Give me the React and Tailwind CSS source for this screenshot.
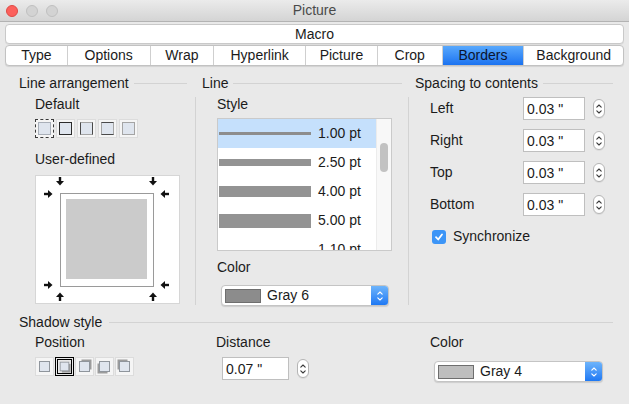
import React from 'react'

const tabs = [
  ['Type', 61],
  ['Options', 83],
  ['Wrap', 64],
  ['Hyperlink', 92],
  ['Picture', 72],
  ['Crop', 65],
  ['Borders', 82],
  ['Background', 100],
]

const lineRows = [
  ['1.00 pt', 'h-[3px] bg-[#8d8d8d]', true],
  ['2.50 pt', 'h-[7px] bg-[#939393]', false],
  ['4.00 pt', 'h-[11px] bg-[#939393]', false],
  ['5.00 pt', 'h-[14px] bg-[#939393]', false],
  ['1.10 pt', 'h-[5px]', false],
]

function Chevrons({ color = '#3a3a3a' }) {
  return (
    <svg width="8" height="14" viewBox="0 0 8 14" fill="none" stroke={color} strokeWidth="1.1" strokeLinecap="round" strokeLinejoin="round">
      <path d="M1.8 5.2 L4 3 L6.2 5.2" />
      <path d="M1.8 8.8 L4 11 L6.2 8.8" />
    </svg>
  )
}

function Stepper() {
  return (
    <div className="w-[12px] h-[19px] rounded-[6px] border border-[#b4b4b4] bg-white flex items-center justify-center shadow-[0_1px_0_rgba(0,0,0,0.06)]">
      <Chevrons />
    </div>
  )
}

function Field({ value, width = 'w-[62px]' }) {
  return (
    <div className={`${width} h-[23px] border border-[#bfbfbf] bg-white pl-[3px] flex items-center leading-none`}>
      {value}
    </div>
  )
}

function ColorSelect({ swatch, label, width }) {
  return (
    <div className={`${width} h-[21px] flex rounded-[4px] border border-[#c4c4c4] bg-white shadow-[0_1px_1px_rgba(0,0,0,0.12)] overflow-hidden`}>
      <div className="flex-1 flex items-center pl-[3px]">
        <div className={`w-[36px] h-[14px] border border-[#6e6e6e] ${swatch}`} />
        <span className="ml-[6px]">{label}</span>
      </div>
      <div className="w-[17px] bg-gradient-to-b from-[#6db4fb] to-[#1d78f3] flex items-center justify-center">
        <Chevrons color="#ffffff" />
      </div>
    </div>
  )
}

function Header({ title, lineClass }) {
  return (
    <div className="flex items-center h-[16px] leading-[16px]">
      <span className="whitespace-nowrap">{title}</span>
      <div className={`flex-1 h-px bg-[#d3d3d3] ml-[5px] ${lineClass}`} />
    </div>
  )
}

// Default line arrangement presets
function ArrIcon({ variant }) {
  const inner = [
    'border-[#a9afb8]',
    'border-[#2b2b2b]',
    'border-x-[#4a4a4a] border-y-[#a4a4a4]',
    'border-y-[#4a4a4a] border-x-[#a4a4a4]',
    'border-[#a4a4a4]',
  ][variant]
  const outer = variant === 0 ? 'border-dashed border-[#3a3a3a]' : 'border-[#dcdcdc]'
  return (
    <div className={`w-[19px] h-[19px] border bg-[#f5f5f5] flex items-center justify-center ${outer}`}>
      <div className={`w-[13px] h-[13px] bg-[#dfe5ee] border ${inner}`} />
    </div>
  )
}

// Shadow position presets
function ShadowIcon({ variant }) {
  const off = [null, [2, 2], [2, -2], [-2, 2], [-2, -2]][variant]
  return (
    <div className={`w-[19px] h-[19px] flex items-center justify-center ${variant === 1 ? 'border-[3px] border-double border-black' : 'border border-[#dcdcdc] bg-[#f5f5f5]'}`}>
      <svg width="15" height="15" viewBox="0 0 15 15">
        {off && <rect x={2.5 + off[0]} y={2.5 + off[1]} width="10" height="10" fill="#9c9c9c" />}
        <rect x="2.5" y="2.5" width="10" height="10" fill="#dfe5ee" stroke="#8f959c" />
      </svg>
    </div>
  )
}

function Arrow({ x, y, rot }) {
  return (
    <g transform={`translate(${x} ${y}) rotate(${rot})`} fill="#111">
      <rect x="-1.2" y="-5" width="2.4" height="4.5" />
      <polygon points="-4,-1 4,-1 0,3.5" />
    </g>
  )
}

export default function App() {
  return (
    <div className="w-[629px] h-[404px] overflow-hidden bg-[#e9e9e9] font-['Liberation_Sans',Arial,sans-serif] text-[14px] text-[#1b1b1b]">
      {/* Title bar */}
      <div className="h-[22px] grid grid-cols-[1fr_auto_1fr] items-center bg-gradient-to-b from-[#ebebeb] to-[#d4d4d4] border-b border-[#b3b3b3]">
        <div className="flex items-center gap-[8px] pl-[6px]">
          <div className="w-[12px] h-[12px] rounded-full bg-[#fc605c] border border-[#de4a45]" />
          <div className="w-[12px] h-[12px] rounded-full bg-[#d3d3d3] border border-[#c0c0c0]" />
          <div className="w-[12px] h-[12px] rounded-full bg-[#d3d3d3] border border-[#c0c0c0]" />
        </div>
        <div className="text-[#4a4a4a]">Picture</div>
        <div />
      </div>

      {/* Macro + tabs */}
      <div className="mx-[5px] mt-[2px] h-[20px] rounded-[4px] border border-[#c9c9c9] bg-white flex items-center justify-center shadow-[0_1px_0_rgba(0,0,0,0.05)]">
        Macro
      </div>
      <div className="mx-[5px] mt-[1px] h-[21px] flex rounded-[4px] border border-[#c2c2c2] bg-white overflow-hidden shadow-[0_1px_1px_rgba(0,0,0,0.1)]">
        {tabs.map(([t, w], i) => (
          <div
            key={t}
            style={{ width: w }}
            className={`flex items-center justify-center ${i > 0 ? 'border-l border-[#cfcfcf]' : ''} ${t === 'Borders' ? 'bg-gradient-to-b from-[#58a8fc] to-[#1a72f0] text-[#0b1530]' : ''}`}
          >
            {t}
          </div>
        ))}
      </div>

      {/* Upper columns */}
      <div className="flex pl-[19px] mt-[9px]">
        {/* Line arrangement */}
        <div className="w-[177px]">
          <Header title="Line arrangement" lineClass="mr-[9px]" />
          <div className="mt-[6px] h-[208px] border-r border-[#d3d3d3] pl-[16px]">
            <div className="leading-[15px]">Default</div>
            <div className="mt-[7px] flex gap-[2px]">
              {[0, 1, 2, 3, 4].map(v => (
                <ArrIcon key={v} variant={v} />
              ))}
            </div>
            <div className="mt-[13px] leading-[16px]">User-defined</div>
            <div className="mt-[8px] w-[145px] h-[129px] border border-[#d6d6d6] bg-white">
              <svg width="143" height="127" viewBox="0 0 143 127">
                <rect x="24.5" y="17.5" width="93" height="93" fill="none" stroke="#9a9a9a" />
                <rect x="30" y="23" width="81" height="80" fill="#cbcbcb" />
                <Arrow x={24} y={6} rot={0} />
                <Arrow x={117} y={6} rot={0} />
                <Arrow x={13} y={18} rot={-90} />
                <Arrow x={128} y={18} rot={90} />
                <Arrow x={13} y={109} rot={-90} />
                <Arrow x={128} y={109} rot={90} />
                <Arrow x={24} y={120} rot={180} />
                <Arrow x={117} y={120} rot={180} />
              </svg>
            </div>
          </div>
        </div>

        {/* Line */}
        <div className="w-[207px] ml-[6px]">
          <Header title="Line" lineClass="mr-[7px]" />
          <div className="mt-[6px] h-[208px] border-r border-[#d3d3d3] pl-[15px]">
            <div className="leading-[15px]">Style</div>
            <div className="mt-[6px] w-[175px] h-[133px] border border-[#cacaca] bg-white flex">
              <div className="flex-1 overflow-hidden">
                {lineRows.map(([label, bar, sel]) => (
                  <div key={label} className={`h-[29px] flex items-center ${sel ? 'bg-[#c5e0fc]' : ''}`}>
                    <div className={`ml-[1px] w-[92px] ${bar}`} />
                    <span className="ml-[7px]">{label}</span>
                  </div>
                ))}
              </div>
              <div className="w-[15px] bg-[#f8f8f8] border-l border-[#ececec]">
                <div className="mt-[24px] ml-[3px] w-[8px] h-[29px] rounded-full bg-[#c2c2c2]" />
              </div>
            </div>
            <div className="mt-[8px] leading-[16px]">Color</div>
            <div className="mt-[10px] ml-[4px]">
              <ColorSelect swatch="bg-[#8c8c8c]" label="Gray 6" width="w-[168px]" />
            </div>
          </div>
        </div>

        {/* Spacing to contents */}
        <div className="w-[200px] ml-[6px]">
          <Header title="Spacing to contents" lineClass="mr-[2px]" />
          <div className="mt-[6px] h-[208px] pl-[15px]">
            {['Left', 'Right', 'Top', 'Bottom'].map((l, i) => (
              <div key={l} className={`flex items-center h-[23px] ${i > 0 ? 'mt-[9px]' : ''}`}>
                <span className="w-[93px]">{l}</span>
                <Field value={'0.03 "'} />
                <div className="ml-[8px]">
                  <Stepper />
                </div>
              </div>
            ))}
            <div className="mt-[10px] flex items-center">
              <div className="ml-[2px] w-[14px] h-[14px] rounded-[3px] bg-[#3c95f7] flex items-center justify-center">
                <svg width="10" height="10" viewBox="0 0 10 10" fill="none" stroke="#fff" strokeWidth="1.8" strokeLinecap="round" strokeLinejoin="round">
                  <path d="M2 5.2 L4.2 7.5 L8 2.5" />
                </svg>
              </div>
              <span className="ml-[7px]">Synchronize</span>
            </div>
          </div>
        </div>
      </div>

      {/* Shadow style */}
      <div className="mt-[9px] pl-[19px] pr-[16px]">
        <Header title="Shadow style" lineClass="ml-[7px]" />
      </div>
      <div className="flex pl-[35px] mt-[4px]">
        <div className="w-[181px]">
          <div className="leading-[16px]">Position</div>
          <div className="mt-[7px] flex gap-[1px]">
            {[0, 1, 2, 3, 4].map(v => (
              <ShadowIcon key={v} variant={v} />
            ))}
          </div>
        </div>
        <div className="w-[214px]">
          <div className="leading-[16px]">Distance</div>
          <div className="mt-[7px] ml-[6px] flex items-center">
            <Field value={'0.07 "'} width="w-[67px]" />
            <div className="ml-[8px]">
              <Stepper />
            </div>
          </div>
        </div>
        <div>
          <div className="leading-[16px]">Color</div>
          <div className="mt-[11px] ml-[4px]">
            <ColorSelect swatch="bg-[#bebebe]" label="Gray 4" width="w-[169px]" />
          </div>
        </div>
      </div>
    </div>
  )
}
